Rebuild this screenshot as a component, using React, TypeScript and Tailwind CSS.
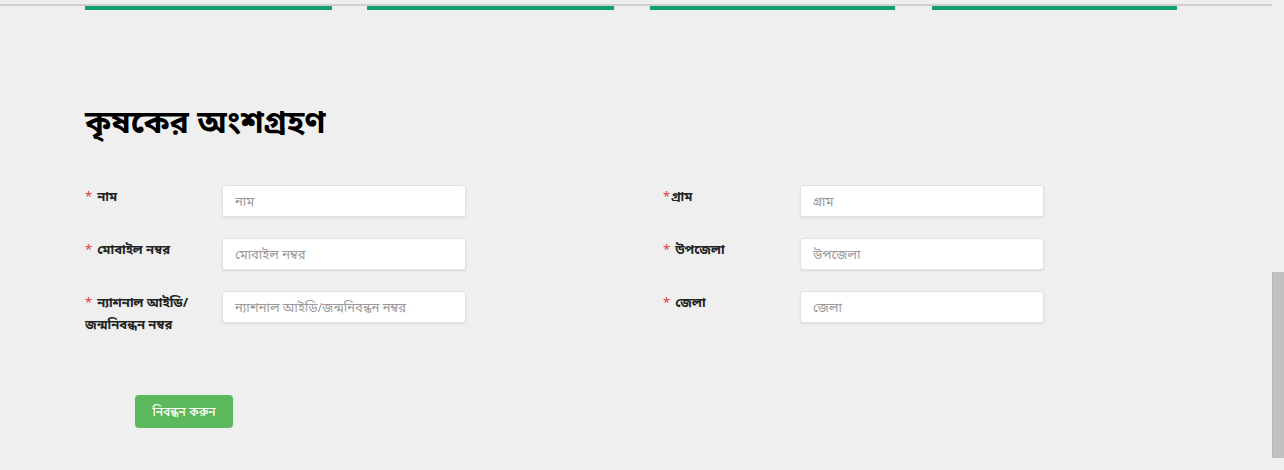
import React from 'react';

const font = { fontFamily: '"Noto Sans", "Noto Sans Bengali", "Lohit Bengali", sans-serif' };

const left = [
  { label: 'নাম', placeholder: 'নাম' },
  { label: 'মোবাইল নম্বর', placeholder: 'মোবাইল নম্বর' },
  { label: 'ন্যাশনাল আইডি/', extra: 'জন্মনিবন্ধন নম্বর', placeholder: 'ন্যাশনাল আইডি/জন্মনিবন্ধন নম্বর' },
];

const right = [
  { label: 'গ্রাম', placeholder: 'গ্রাম', tight: true },
  { label: 'উপজেলা', placeholder: 'উপজেলা' },
  { label: 'জেলা', placeholder: 'জেলা' },
];

type FieldProps = { label: string; extra?: string; placeholder: string; tight?: boolean };

const Field: React.FC<FieldProps> = ({ label, extra, placeholder, tight }) => (
  <div className="flex items-start h-[32px]">
    <div className="w-[137px] shrink-0 pr-2 text-[13px] leading-[22px]">
      <div className="flex items-start">
        <span className={`text-[#e23b3b] ${tight ? 'mr-[1px]' : 'mr-[5px]'}`}>*</span>
        <label className="font-bold text-[#222] whitespace-nowrap">{label}</label>
      </div>
      {extra && <div className="font-bold text-[#222] whitespace-nowrap">{extra}</div>}
    </div>
    <input
      type="text"
      placeholder={placeholder}
      className="w-[244px] h-[32px] bg-white border border-[#e2e2e2] rounded-[3px] shadow-[0_1px_2px_rgba(0,0,0,0.08)] px-3 text-[13px] text-[#333] placeholder:text-[#9a9a9a] outline-none"
      style={font}
    />
  </div>
);

export default function App() {
  return (
    <div className="w-[1284px] h-[470px] bg-[#efefef] overflow-hidden flex" style={font}>
      <div className="flex-1 flex flex-col">
        <div className="mt-[4px] border-t-2 border-[#cfcfcf] flex pl-[85px]">
          <div className="w-[247px] h-[4px] bg-[#12a06a]" />
          <div className="w-[247px] h-[4px] bg-[#12a06a] ml-[35px]" />
          <div className="w-[245px] h-[4px] bg-[#12a06a] ml-[36px]" />
          <div className="w-[245px] h-[4px] bg-[#12a06a] ml-[37px]" />
        </div>

        <h1 className="pl-[85px] mt-[89px] text-[32px] leading-[44px] font-bold text-black">কৃষকের অংশগ্রহণ</h1>

        <div className="flex pl-[85px] mt-[42px] gap-[197px]">
          <div className="flex flex-col gap-[21px]">
            {left.map((f) => (
              <Field key={f.label} {...f} />
            ))}
          </div>
          <div className="flex flex-col gap-[21px]">
            {right.map((f) => (
              <Field key={f.label} {...f} />
            ))}
          </div>
        </div>

        <div className="pl-[135px] mt-[72px]">
          <button className="w-[98px] h-[33px] bg-[#5cb85c] rounded-[4px] text-white text-[12px] font-medium" style={font}>
            নিবন্ধন করুন
          </button>
        </div>
      </div>

      <div className="w-[12px] flex flex-col bg-[#efefef] pt-[272px]">
        <div className="h-[186px] bg-[#c1c1c1] border-l border-[#b5b5b5]" />
      </div>
    </div>
  );
}
